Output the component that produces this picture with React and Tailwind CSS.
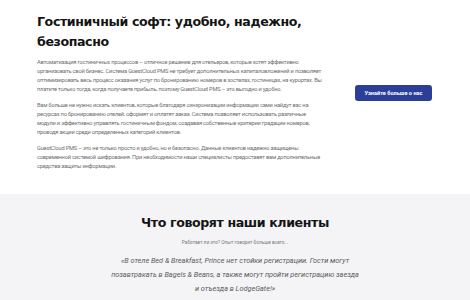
export default function App() {
  const body = "text-[5.7px] leading-[9px] text-[#6e6e6e] tracking-[-0.2px]";
  return (
    <div className="w-[470px] h-[300px] overflow-hidden bg-white" style={{ fontFamily: "Roboto, 'Liberation Sans', sans-serif" }}>
      <section className="bg-white h-[194px] pl-[37px] pr-[38px] pt-[12px] flex">
        <div className="w-[288px]">
          <h1 className="text-[12.6px] leading-[20px] font-bold text-[#141414] tracking-[-0.4px] w-[300px]" style={{ fontFamily: "'DejaVu Sans', sans-serif" }}>
            Гостиничный софт: удобно, надежно, безопасно
          </h1>
          <div className={`mt-[6px] ${body}`}>
            <p>
              Автоматизация гостиничных процессов – отличное решение для отельеров, которые хотят эффективно организовать свой бизнес. Система GuestCloud PMS не требует дополнительных капиталовложений и позволяет оптимизировать весь процесс оказания услуг по бронированию номеров в хостелах, гостиницах, на курортах. Вы платите только тогда, когда получаете прибыль, поэтому GuestCloud PMS – это выгодно и удобно.
            </p>
            <p className="mt-[7px]">
              Вам больше не нужно искать клиентов, которые благодаря синхронизации информации сами найдут вас на ресурсах по бронированию отелей, оформят и оплатят заказ. Система позволяет использовать различные модули и эффективно управлять гостиничным фондом, создавая собственные критерии градации номеров, проводя акции среди определенных категорий клиентов.
            </p>
            <p className="mt-[7px]">
              GuestCloud PMS – это не только просто и удобно, но и безопасно. Данные клиентов надежно защищены современной системой шифрования. При необходимости наши специалисты предоставят вам дополнительные средства защиты информации.
            </p>
          </div>
        </div>
        <div className="flex-1 flex justify-end pt-[73px]">
          <button className="h-[16px] w-[77px] rounded-[3px] bg-[#2b3f98] text-white text-[5.6px] font-bold">
            Узнайте больше о нас
          </button>
        </div>
      </section>
      <section className="bg-[#f4f4f6] h-[106px] flex flex-col items-center pt-[19px]">
        <h2 className="text-[12.6px] leading-[20px] font-bold text-[#141414] tracking-[-0.4px]" style={{ fontFamily: "'DejaVu Sans', sans-serif" }}>
          Что говорят наши клиенты
        </h2>
        <p className="mt-[6px] text-[4.8px] text-[#777]">Работает ли это? Опыт говорит больше всего...</p>
        <p className="mt-[8px] w-[250px] text-center italic text-[7.3px] leading-[14px] text-[#5a5a5a]">
          «В отеле Bed &amp; Breakfast, Prince нет стойки регистрации. Гости могут позавтракать в Bagels &amp; Beans, а также могут пройти регистрацию заезда и отъезда в LodgeGate!»
        </p>
      </section>
    </div>
  );
}
